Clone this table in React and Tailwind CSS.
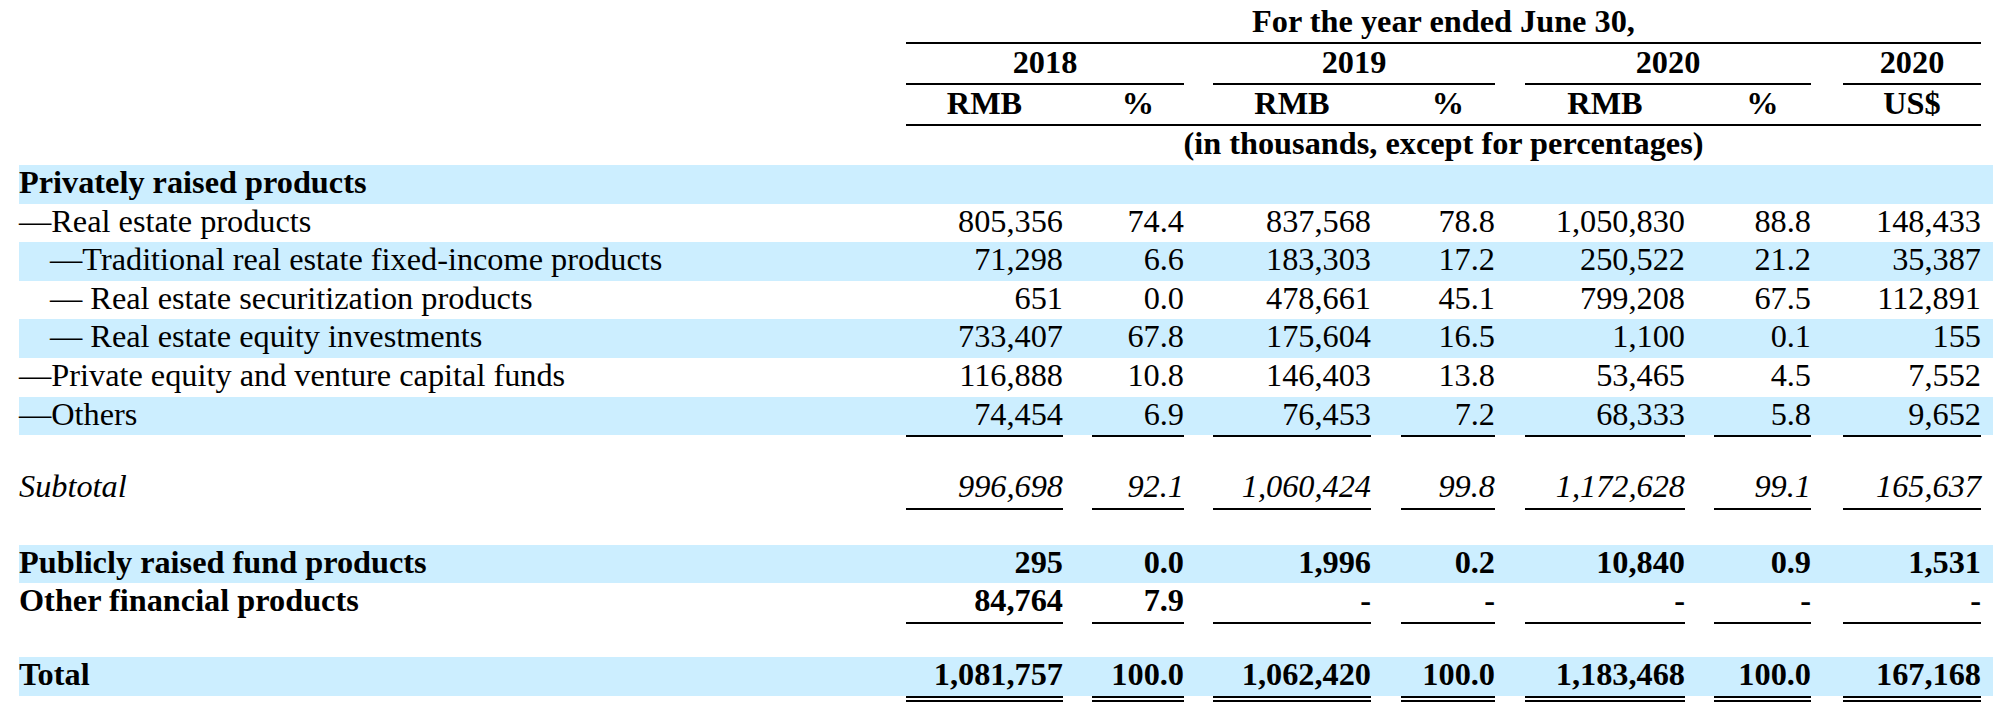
import React from "react";

const colCls = [
  "w-[157px] shrink-0",
  "ml-[29px] w-[92px] shrink-0",
  "ml-[29px] w-[158px] shrink-0",
  "ml-[30px] w-[94px] shrink-0",
  "ml-[30px] w-[160px] shrink-0",
  "ml-[29px] w-[97px] shrink-0",
  "ml-[32px] w-[138px] shrink-0",
];

const rows = [
  { label: "Privately raised products", bold: true, band: true, vals: null },
  { label: "\u2014Real estate products", vals: ["805,356", "74.4", "837,568", "78.8", "1,050,830", "88.8", "148,433"] },
  { label: "\u2014Traditional real estate fixed-income products", indent: true, band: true, vals: ["71,298", "6.6", "183,303", "17.2", "250,522", "21.2", "35,387"] },
  { label: "\u2014 Real estate securitization products", indent: true, vals: ["651", "0.0", "478,661", "45.1", "799,208", "67.5", "112,891"] },
  { label: "\u2014 Real estate equity investments", indent: true, band: true, vals: ["733,407", "67.8", "175,604", "16.5", "1,100", "0.1", "155"] },
  { label: "\u2014Private equity and venture capital funds", vals: ["116,888", "10.8", "146,403", "13.8", "53,465", "4.5", "7,552"] },
  { label: "\u2014Others", band: true, vals: ["74,454", "6.9", "76,453", "7.2", "68,333", "5.8", "9,652"] },
];

function DataRow({ label, bold, italic, band, indent, vals }) {
  return (
    <div
      className={
        "flex h-[38.6px] w-[1974px] items-start leading-[35px] " +
        (band ? "bg-[#cceeff] " : "") +
        (bold ? "font-bold " : "") +
        (italic ? "italic " : "")
      }
    >
      <div className={"w-[887px] shrink-0 whitespace-nowrap " + (indent ? "pl-[31px]" : "")}>{label}</div>
      {vals &&
        vals.map((v, i) => (
          <div key={i} className={colCls[i] + " text-right whitespace-nowrap"}>
            {v}
          </div>
        ))}
    </div>
  );
}

function Rule({ double }) {
  return (
    <div className="flex w-[1974px]">
      <div className="w-[887px] shrink-0" />
      {colCls.map((c, i) => (
        <div
          key={i}
          className={c + (double ? " h-[6px] border-y-2 border-black" : " h-[2px] bg-black")}
        />
      ))}
    </div>
  );
}

export default function App() {
  return (
    <div className="w-[2004px] h-[718px] overflow-hidden bg-white pt-[3px] pl-[19px] text-[32.3px] text-black font-['Liberation_Serif','Times_New_Roman',serif]">
      {/* Header row 0 */}
      <div className="flex h-[41px]">
        <div className="w-[887px] shrink-0" />
        <div className="w-[1075px] shrink-0 border-b-2 border-black text-center font-bold leading-[37px]">
          For the year ended June 30,
        </div>
      </div>
      {/* Header row 1: years */}
      <div className="flex h-[41px] font-bold leading-[37px]">
        <div className="w-[887px] shrink-0" />
        <div className="w-[278px] shrink-0 border-b-2 border-black text-center">2018</div>
        <div className="ml-[29px] w-[282px] shrink-0 border-b-2 border-black text-center">2019</div>
        <div className="ml-[30px] w-[286px] shrink-0 border-b-2 border-black text-center">2020</div>
        <div className="ml-[32px] w-[138px] shrink-0 border-b-2 border-black text-center">2020</div>
      </div>
      {/* Header row 2: currencies */}
      <div className="flex h-[41px] font-bold leading-[36px]">
        <div className="w-[887px] shrink-0" />
        <div className="flex w-[1075px] shrink-0 border-b-2 border-black">
          {["RMB", "%", "RMB", "%", "RMB", "%", "US$"].map((t, i) => (
            <div key={i} className={colCls[i] + " text-center"}>
              {t}
            </div>
          ))}
        </div>
      </div>
      {/* Header row 3 */}
      <div className="flex h-[39px] font-bold leading-[35px]">
        <div className="w-[887px] shrink-0" />
        <div className="w-[1075px] shrink-0 text-center">(in thousands, except for percentages)</div>
      </div>

      {rows.map((r, i) => (
        <DataRow key={i} {...r} />
      ))}
      <Rule />
      <div className="h-[32px]" />
      <DataRow
        label="Subtotal"
        italic
        vals={["996,698", "92.1", "1,060,424", "99.8", "1,172,628", "99.1", "165,637"]}
      />
      <Rule />
      <div className="h-[35px]" />
      <DataRow
        label="Publicly raised fund products"
        bold
        band
        vals={["295", "0.0", "1,996", "0.2", "10,840", "0.9", "1,531"]}
      />
      <DataRow label="Other financial products" bold vals={["84,764", "7.9", "-", "-", "-", "-", "-"]} />
      <Rule />
      <div className="h-[33px]" />
      <DataRow
        label="Total"
        bold
        band
        vals={["1,081,757", "100.0", "1,062,420", "100.0", "1,183,468", "100.0", "167,168"]}
      />
      <Rule double />
    </div>
  );
}
